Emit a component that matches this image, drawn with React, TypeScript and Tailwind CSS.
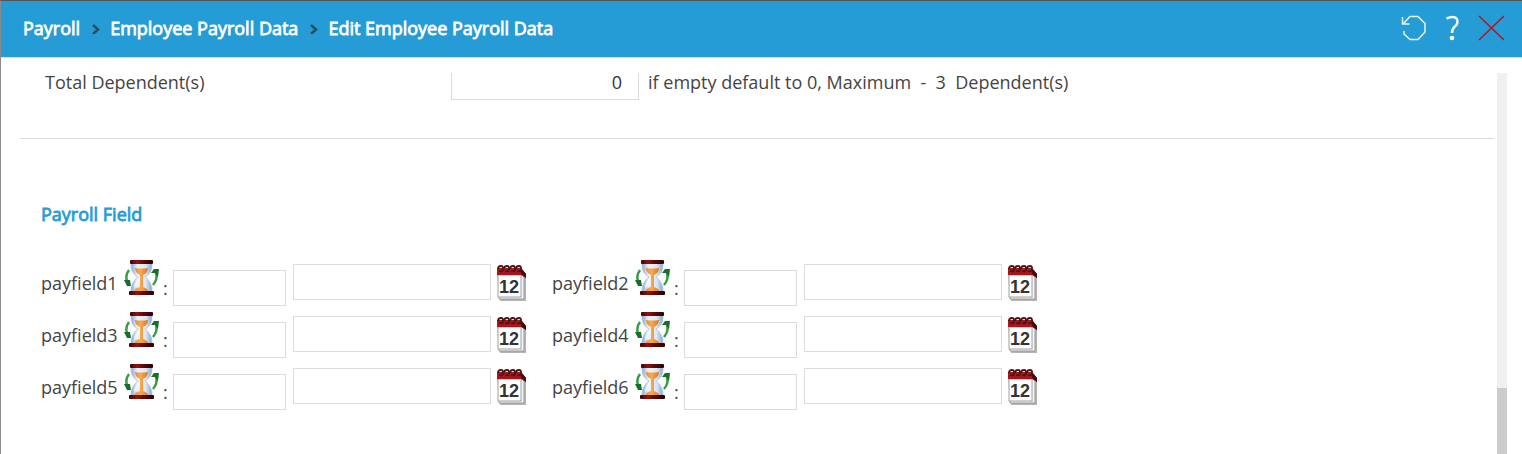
import { useState } from "react";

type PayFieldProps = {
  name: string;
};

const trail = ["Payroll", "Employee Payroll Data", "Edit Employee Payroll Data"];

const payFields = [
  "payfield1",
  "payfield2",
  "payfield3",
  "payfield4",
  "payfield5",
  "payfield6",
];

const HourglassIcon = () => (
  <svg width="36" height="36" viewBox="0 0 36 36" aria-hidden="true">
    <defs>
      <linearGradient id="glass" x1="0" x2="1">
        <stop offset="0" stopColor="#86a9d8" />
        <stop offset="0.3" stopColor="#eaf1fa" />
        <stop offset="0.7" stopColor="#dbe7f5" />
        <stop offset="1" stopColor="#86a6d2" />
      </linearGradient>
      <linearGradient id="sand" x1="0" x2="1">
        <stop offset="0" stopColor="#ee8a24" />
        <stop offset="0.4" stopColor="#f7ac55" />
        <stop offset="1" stopColor="#e2761a" />
      </linearGradient>
      <linearGradient id="cap" x1="0" x2="1">
        <stop offset="0" stopColor="#3c0303" />
        <stop offset="0.3" stopColor="#8e1510" />
        <stop offset="0.6" stopColor="#5c0805" />
        <stop offset="1" stopColor="#2c0101" />
      </linearGradient>
    </defs>
    <path
      d="M7 3h21c0 8-2 11-7 14c5 4 7 8 7 15H7c0-7 2-11 7-15C9 14 7 11 7 3z"
      fill="url(#glass)"
      stroke="#a9bfdb"
      strokeWidth="0.8"
    />
    <path d="M11 8q6 1 13 0q0 5-5 7h-3q-5-2-5-7z" fill="url(#sand)" />
    <path d="M16 14h3v13q4 1 6 5H10q1-4 6-5z" fill="url(#sand)" />
    <path d="M14 19q-4 4-4 9l3-2q3-3 3-8z" fill="#f1f6fc" />
    <rect x="6" y="0" width="23" height="4" rx="1" fill="url(#cap)" />
    <rect x="5" y="31" width="25" height="4" rx="1" fill="url(#cap)" />
    <path d="M5 10q-4 5-2 11" fill="none" stroke="#3b9a45" strokeWidth="2.500" />
    <path d="M0 20l6 0l1 6l-4 0z" fill="#17702a" />
    <path d="M29 25q5-6 3-12" fill="none" stroke="#3b9a45" strokeWidth="2.500" />
    <path d="M27 13l3-4h5l-1 8l-3-4z" fill="#17702a" />
  </svg>
);

const CalendarIcon = () => (
  <svg width="30" height="38" viewBox="0 0 30 38" aria-hidden="true">
    <path d="M2 11h27v26H3z" fill="#b4b4b4" />
    <path d="M1 10h26v25H2z" fill="#f4f4f4" stroke="#9a9a9a" />
    <rect x="1" y="11" width="23" height="22" fill="#fff" stroke="#a0a0a0" />
    <path d="M0 4h24l5 6v4l-5-3H0z" fill="#a8161c" />
    <path d="M24 4l5 6v4l-5-4z" fill="#4a0509" />
    {[1, 7, 13, 19].map((x) => (
      <path
        key={x}
        d={`M${x} 5q0-3 3-3q2 0 2 2v2q-1 2-4 1`}
        fill="none"
        stroke="#4a1518"
        strokeWidth="1.800"
      />
    ))}
    <text
      x="12"
      y="29"
      textAnchor="middle"
      className="font-['Liberation_Sans'] text-[18px] font-bold"
      fill="#333"
    >
      12
    </text>
  </svg>
);

const PayField: React.FC<PayFieldProps> = ({ name }) => {
  const [code, setCode] = useState("");
  const [date, setDate] = useState("");

  return (
    <div className="flex h-[52px] w-[511px] items-start">
      <div className="flex w-[132px] items-start">
        <label htmlFor={name} className="w-[83px] pt-[11px]">
          {name}
        </label>
        <button type="button" aria-label={`${name} history`}>
          <HourglassIcon />
        </button>
        <span className="pt-4 pl-[3px]">:</span>
      </div>
      <input
        id={name}
        value={code}
        onChange={(e) => setCode(e.target.value)}
        className="mt-[10px] h-9 w-[113px] border border-[#dcdcdc] px-2"
      />
      <input
        aria-label={`${name} date`}
        value={date}
        onChange={(e) => setDate(e.target.value)}
        className="mt-1 ml-[7px] h-9 w-[198px] border border-[#dcdcdc] px-2"
      />
      <button
        type="button"
        aria-label={`${name} calendar`}
        className="mt-1 ml-[6px]"
      >
        <CalendarIcon />
      </button>
    </div>
  );
};

const App = () => {
  const [dependents, setDependents] = useState("0");

  return (
    <div className="flex h-screen flex-col overflow-hidden border-t border-l border-t-[#555] border-l-[#8a8a8a] bg-white font-['Open_Sans',sans-serif] text-[18px] leading-6 text-[#444]">
      {/* Header */}
      <header className="flex h-14 shrink-0 items-center justify-between bg-[#269cd6] pr-4 pb-[2px] pl-[22px]">
        <nav className="flex items-center text-white [-webkit-text-stroke:0.8px_#fff]">
          {trail.map((item, index) => (
            <div key={item} className="flex items-center">
              {index > 0 && (
                <svg width="30" height="12" viewBox="0 0 30 12" aria-hidden="true">
                  <path
                    d="M13 3l5 4.500l-5 4.500"
                    fill="none"
                    stroke="#2f4c5c"
                    strokeWidth="2.500"
                  />
                </svg>
              )}
              <a href="#">{item}</a>
            </div>
          ))}
        </nav>
        <div className="flex items-center">
          <button type="button" aria-label="Reset">
            <svg width="26" height="26" viewBox="0 0 26 26" aria-hidden="true">
              <path
                d="M1.500 2v7h7M2 9l7-7.500h8l7 7V17l-7 7.500H9L3 19v-3"
                fill="none"
                stroke="#e8f5fc"
                strokeWidth="1.500"
              />
            </svg>
          </button>
          <button type="button" aria-label="Help" className="ml-[18px]">
            <svg width="16" height="26" viewBox="0 0 16 26" aria-hidden="true">
              <path
                d="M1.500 3.500Q5 2 7.500 2Q12.500 2 12.500 7Q12.500 9.500 9.500 12Q7 14 7 18"
                fill="none"
                stroke="#f4fafe"
                strokeWidth="2.500"
              />
              <circle cx="7" cy="23" r="2.300" fill="#f4fafe" />
            </svg>
          </button>
          <button type="button" aria-label="Close" className="ml-[17px]">
            <svg width="28" height="26" viewBox="0 0 28 26" aria-hidden="true">
              <path d="M1 1l25 24M26 1L1 25" stroke="#b3151d" strokeWidth="1.500" />
            </svg>
          </button>
        </div>
      </header>

      {/* Form */}
      <div className="flex min-h-0 flex-1 border-t border-[#dcdcdc] pt-[15px] pr-[15px]">
        <main className="min-w-0 flex-1 pr-[3px] pl-[19px]">
          <div className="flex items-start border-b border-[#dcdcdc] pb-[38px] pl-[25px]">
            <label htmlFor="dependents" className="w-[406px] leading-[18px]">
              Total Dependent(s)
            </label>
            <div className="overflow-hidden">
              <input
                id="dependents"
                value={dependents}
                onChange={(e) => setDependents(e.target.value)}
                className="-mt-[9px] block h-9 w-[188px] border border-[#dcdcdc] px-4 text-right text-[#333]"
              />
            </div>
            <span className="ml-[9px] leading-[18px] whitespace-pre">
              if empty default to 0, Maximum  -  3  Dependent(s)
            </span>
          </div>

          <section className="pt-[63px] pl-[21px]">
            <h2 className="text-[#269cd6] [-webkit-text-stroke:0.8px_#269cd6]">
              Payroll Field
            </h2>
            <div className="mt-[34px] grid grid-cols-[511px_511px]">
              {payFields.map((name) => (
                <PayField key={name} name={name} />
              ))}
            </div>
          </section>
        </main>

        {/* Scrollbar */}
        <div className="flex w-[10px] flex-col bg-[#f0f0f0]">
          <div className="mt-auto h-[66px] bg-[#ccc]" />
        </div>
      </div>
    </div>
  );
};

export default App;
